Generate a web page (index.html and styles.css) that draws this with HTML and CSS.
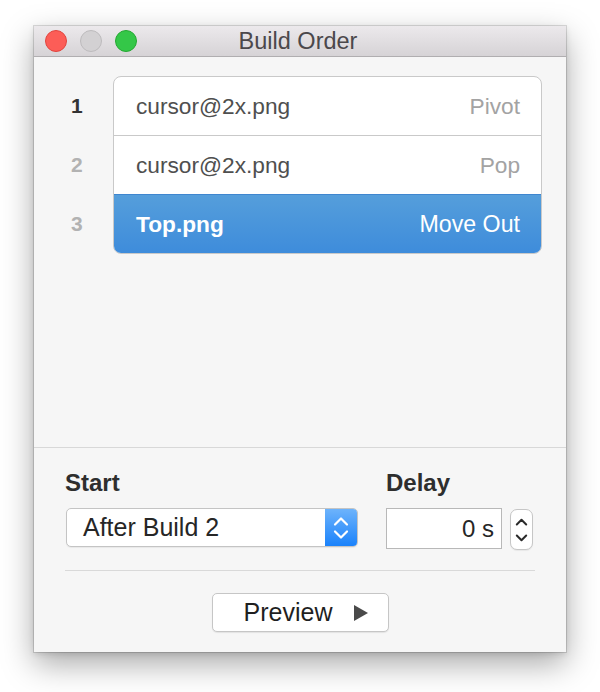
FILE: index.html
```html
<!DOCTYPE html>
<html>
<head>
<meta charset="utf-8">
<link rel="stylesheet" href="styles.css">
</head>
<body>
<div class="window">
  <div class="titlebar">
    <div class="lights">
      <span class="light red"></span>
      <span class="light gray"></span>
      <span class="light green"></span>
    </div>
    <div class="title">Build Order</div>
  </div>
  <div class="list-area">
    <div class="numbers">
      <div class="num active">1</div>
      <div class="num">2</div>
      <div class="num">3</div>
    </div>
    <div class="list">
      <div class="row"><span class="name">cursor@2x.png</span><span class="effect">Pivot</span></div>
      <div class="row"><span class="name">cursor@2x.png</span><span class="effect">Pop</span></div>
      <div class="row selected"><span class="name">Top.png</span><span class="effect">Move Out</span></div>
    </div>
  </div>
  <div class="panel">
    <div class="controls">
      <div class="col-start">
        <div class="label">Start</div>
        <div class="popup">
          <span class="popup-text">After Build 2</span>
          <span class="popup-arrows">
            <svg width="16" height="24" viewBox="0 0 16 24"><path d="M2 8.5 L8 2.5 L14 8.5" fill="none" stroke="#fff" stroke-width="2.2" stroke-linecap="round" stroke-linejoin="round"/><path d="M2 15.5 L8 21.5 L14 15.5" fill="none" stroke="#fff" stroke-width="2.2" stroke-linecap="round" stroke-linejoin="round"/></svg>
          </span>
        </div>
      </div>
      <div class="col-delay">
        <div class="label">Delay</div>
        <div class="delay-row">
          <div class="field">0 s</div>
          <div class="stepper">
            <svg width="13" height="24" viewBox="0 0 13 24"><path d="M1.8 6.5 L6.5 1.8 L11.2 6.5" fill="none" stroke="#2a2a2a" stroke-width="2" stroke-linecap="round" stroke-linejoin="round"/><path d="M1.8 17.5 L6.5 22.2 L11.2 17.5" fill="none" stroke="#2a2a2a" stroke-width="2" stroke-linecap="round" stroke-linejoin="round"/></svg>
          </div>
        </div>
      </div>
    </div>
    <div class="divider"></div>
    <div class="button-row">
      <div class="button">
        <span>Preview</span>
        <svg class="play" width="14" height="16" viewBox="0 0 14 16"><path d="M0 0 L14 8 L0 16 Z" fill="#4a4a4a"/></svg>
      </div>
    </div>
  </div>
</div>
</body>
</html>
```

FILE: styles.css
```css
* { box-sizing: border-box; }

html, body {
  margin: 0;
  padding: 0;
  background: #ffffff;
}

body {
  font-family: "Liberation Sans", Arial, sans-serif;
  padding: 26px 0 0 34px;
  min-height: 692px;
}

.window {
  width: 532px;
  height: 626px;
  background: #f6f6f6;
  display: flex;
  flex-direction: column;
  box-shadow: 0 0 0 1px rgba(0,0,0,0.13), 0 12px 30px rgba(0,0,0,0.34), 0 2px 6px rgba(0,0,0,0.12);
}

.titlebar {
  height: 31px;
  flex: none;
  position: relative;
  background: linear-gradient(#ece9ec, #d6d3d6);
  border-bottom: 1px solid #b0aeb0;
  display: flex;
  align-items: center;
  justify-content: center;
}

.lights {
  position: absolute;
  left: 11px;
  top: 4px;
  display: flex;
  gap: 13px;
}

.light {
  width: 22px;
  height: 22px;
  border-radius: 50%;
  display: block;
}

.light.red { background: #fc5d57; border: 1px solid #e1443e; }
.light.gray { background: #d3d1d3; border: 1px solid #bdbbbd; }
.light.green { background: #34c748; border: 1px solid #24a832; }

.title {
  font-size: 23.5px;
  color: #4b484b;
  margin-left: -4px;
  line-height: 30px;
}

.list-area {
  flex: 1;
  display: flex;
  align-items: flex-start;
  padding-top: 19px;
}

.numbers {
  width: 79px;
  flex: none;
  padding-top: 1px;
  display: flex;
  flex-direction: column;
  gap: 1px;
}

.num {
  height: 58px;
  line-height: 58px;
  padding-left: 37px;
  font-size: 21px;
  font-weight: bold;
  color: #b2b2b2;
}

.num.active { color: #333333; }

.list {
  flex: 1;
  margin-right: 24px;
  border: 1px solid #c9c9c9;
  border-radius: 8px;
  overflow: hidden;
  background: #ffffff;
}

.row {
  height: 59px;
  display: flex;
  align-items: center;
  justify-content: space-between;
  padding: 0 21px 0 22px;
  font-size: 22.7px;
  border-top: 1px solid #c9c9c9;
}

.row:first-child {
  border-top: none;
  height: 58px;
}

.name { color: #4f4f4f; }
.effect { color: #a3a3a3; }

.row.selected {
  background: linear-gradient(#559edb, #3e8cdb);
  border-top: 1px solid #3f86cf;
}

.row.selected .name { color: #ffffff; font-weight: bold; }
.row.selected .effect { color: #ffffff; font-size: 23.2px; }

.panel {
  height: 205px;
  flex: none;
  border-top: 1px solid #d8d8d8;
  padding: 21px 31px 0 31px;
}

.controls {
  display: flex;
  align-items: flex-start;
}

.label {
  font-size: 24px;
  font-weight: bold;
  color: #2e2e2e;
  line-height: 28px;
  height: 28px;
  margin-bottom: 11px;
}

.col-start {
  width: 293px;
}

.col-delay {
  margin-left: 28px;
}

.popup {
  margin-left: 1px;
  margin-top: 1px;
  width: 292px;
  height: 39px;
  border: 1px solid #c4c4c4;
  border-radius: 5px;
  background: #ffffff;
  display: flex;
  align-items: stretch;
  overflow: hidden;
  box-shadow: 0 1px 1px rgba(0,0,0,0.06);
}

.popup-text {
  flex: 1;
  font-size: 25px;
  color: #262626;
  padding-left: 16px;
  line-height: 37px;
}

.popup-arrows {
  width: 32px;
  background: linear-gradient(#6db3fb, #1a82fb);
  display: flex;
  align-items: center;
  justify-content: center;
}

.delay-row {
  display: flex;
  align-items: flex-start;
  gap: 8px;
}

.field {
  width: 116px;
  height: 41px;
  border: 1px solid #b8b8b8;
  background: #ffffff;
  font-size: 24px;
  color: #262626;
  text-align: right;
  padding-right: 7px;
  line-height: 39px;
}

.stepper {
  margin-top: 1px;
  width: 23px;
  height: 41px;
  border: 1px solid #c6c6c6;
  border-radius: 7px;
  background: #ffffff;
  display: flex;
  align-items: center;
  justify-content: center;
  box-shadow: 0 1px 1px rgba(0,0,0,0.06);
}

.divider {
  margin-top: 20px;
  height: 1px;
  background: #d9d9d9;
}

.button-row {
  display: flex;
  justify-content: center;
  padding-top: 22px;
}

.button {
  width: 177px;
  height: 39px;
  border: 1px solid #c6c6c6;
  border-radius: 5px;
  background: #ffffff;
  box-shadow: 0 1px 1px rgba(0,0,0,0.08);
  display: flex;
  align-items: center;
  justify-content: flex-end;
  padding-right: 20px;
  gap: 21px;
  font-size: 25px;
  color: #1f1f1f;
}

.play { display: block; }
```
